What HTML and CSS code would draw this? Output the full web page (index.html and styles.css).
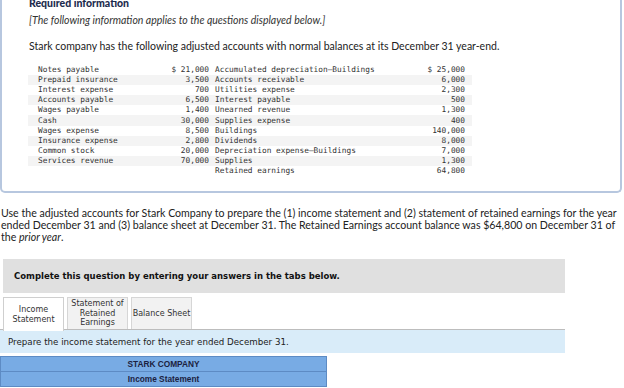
FILE: index.html
```html
<!DOCTYPE html>
<html>
<head>
<meta charset="utf-8">
<link rel="stylesheet" href="styles.css">
</head>
<body>
<div class="page">
  <section class="info-box">
    <h2 class="info-title">Required information</h2>
    <p class="info-note">[The following information applies to the questions displayed below.]</p>
    <p class="info-text">Stark company has the following adjusted accounts with normal balances at its December 31 year-end.</p>
    <table class="accts">
      <tr><td class="n1">Notes payable</td><td class="a1">$ 21,000</td><td class="n2">Accumulated depreciation—Buildings</td><td class="a2">$ 25,000</td></tr>
      <tr><td class="n1">Prepaid insurance</td><td class="a1">3,500</td><td class="n2">Accounts receivable</td><td class="a2">6,000</td></tr>
      <tr><td class="n1">Interest expense</td><td class="a1">700</td><td class="n2">Utilities expense</td><td class="a2">2,300</td></tr>
      <tr><td class="n1">Accounts payable</td><td class="a1">6,500</td><td class="n2">Interest payable</td><td class="a2">500</td></tr>
      <tr><td class="n1">Wages payable</td><td class="a1">1,400</td><td class="n2">Unearned revenue</td><td class="a2">1,300</td></tr>
      <tr><td class="n1">Cash</td><td class="a1">30,000</td><td class="n2">Supplies expense</td><td class="a2">400</td></tr>
      <tr><td class="n1">Wages expense</td><td class="a1">8,500</td><td class="n2">Buildings</td><td class="a2">140,000</td></tr>
      <tr><td class="n1">Insurance expense</td><td class="a1">2,800</td><td class="n2">Dividends</td><td class="a2">8,000</td></tr>
      <tr><td class="n1">Common stock</td><td class="a1">20,000</td><td class="n2">Depreciation expense—Buildings</td><td class="a2">7,000</td></tr>
      <tr><td class="n1">Services revenue</td><td class="a1">70,000</td><td class="n2">Supplies</td><td class="a2">1,300</td></tr>
      <tr><td class="n1"></td><td class="a1"></td><td class="n2">Retained earnings</td><td class="a2">64,800</td></tr>
    </table>
  </section>

  <p class="question">Use the adjusted accounts for Stark Company to prepare the (1) income statement and (2) statement of retained earnings for the year ended December 31 and (3) balance sheet at December 31. The Retained Earnings account balance was $64,800 on December 31 of the <em>prior year</em>.</p>

  <div class="complete-bar">Complete this question by entering your answers in the tabs below.</div>

  <div class="tabs">
    <div class="tab active">Income<br>Statement</div>
    <div class="tab">Statement of<br>Retained<br>Earnings</div>
    <div class="tab">Balance Sheet</div>
  </div>
  <div class="prompt-bar">Prepare the income statement for the year ended December 31.</div>

  <table class="stmt">
    <tr><th>STARK COMPANY</th></tr>
    <tr><th>Income Statement</th></tr>
  </table>
</div>
</body>
</html>
```

FILE: styles.css
```css
html, body {
  margin: 0;
  padding: 0;
  background: #ffffff;
  overflow: hidden;
}
.page {
  width: 624px;
  height: 388px;
  overflow: hidden;
  font-family: Lato, "Open Sans", sans-serif;
  color: #222;
}
.info-box {
  margin: -6px 2px 0 0;
  border: 2px solid #b7c7df;
  border-top: none;
  border-radius: 0 0 5px 5px;
  padding: 2px 0 15px 27px;
}
.info-title {
  margin: 0;
  font-size: 10.5px;
  line-height: 14px;
  font-weight: 900;
  color: #1c2b4d;
}
.info-note {
  margin: 3px 0 0;
  font-size: 10.5px;
  line-height: 14px;
  font-style: italic;
  color: #333;
}
.info-text {
  margin: 12px 0 0;
  font-size: 10.5px;
  line-height: 14px;
  color: #222;
}
.accts {
  margin: 12px 0 0 -1px;
  border-collapse: collapse;
  width: 444px;
  font-family: "DejaVu Sans Mono", "Liberation Mono", monospace;
  font-size: 7.8px;
  color: #333;
}
.accts tr:nth-child(even) td {
  background: #f4f4f4;
}
.accts td {
  padding: 0;
  height: 10.1px;
  line-height: 10px;
  white-space: nowrap;
}
.accts .n1 { width: 112px; padding-left: 10px; }
.accts .a1 { width: 59px; text-align: right; }
.accts .n2 { width: 185px; padding-left: 6px; }
.accts .a2 { width: 65px; text-align: right; padding-right: 7px; }

.question {
  margin: 14px 0 0 1px;
  font-size: 10.6px;
  line-height: 12px;
  color: #222;
}
.complete-bar {
  margin: 16px 0 0 3px;
  width: 551px;
  height: 34px;
  padding-left: 11px;
  background: #e0e0e0;
  display: flex;
  align-items: center;
  font-family: "DejaVu Sans", Verdana, sans-serif;
  font-weight: bold;
  font-size: 8.5px;
  color: #111;
}
.tabs {
  display: flex;
  gap: 3px;
  margin: 4px 0 0 3px;
  height: 32px;
}
.tab {
  width: 59px;
  border: 1px solid #d6d6d6;
  border-bottom: none;
  background: #f2f2f2;
  display: flex;
  align-items: center;
  justify-content: center;
  text-align: center;
  font-family: "DejaVu Sans", Verdana, sans-serif;
  font-size: 8px;
  line-height: 9.8px;
  color: #333;
}
.tab.active {
  background: #ffffff;
  border-color: #cfcfcf;
  position: relative;
  z-index: 1;
  height: 33px;
}
.prompt-bar {
  width: 557px;
  height: 23px;
  border-top: 1px solid #bdbdbd;
  background: #d9ecf9;
  padding-left: 8px;
  display: flex;
  align-items: center;
  font-family: "DejaVu Sans", Verdana, sans-serif;
  font-size: 8.7px;
  color: #222;
}
.stmt {
  margin: 3px 0 0 0;
  width: 327px;
  border-collapse: collapse;
}
.stmt th {
  background: #78abe4;
  border: 1px solid #5d8bc4;
  height: 14px;
  padding: 0;
  font-family: "Liberation Sans", Arial, sans-serif;
  font-weight: bold;
  font-size: 8.3px;
  color: #1b2140;
}
```
